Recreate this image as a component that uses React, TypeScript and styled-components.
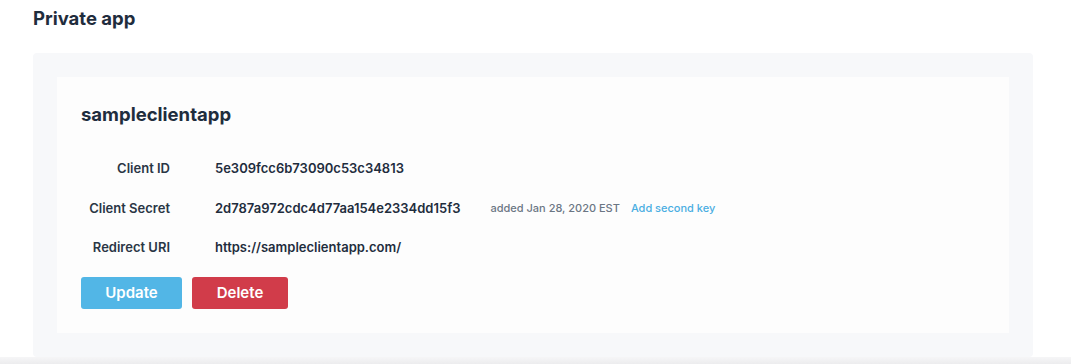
import { Fragment } from 'react'
import styled, { createGlobalStyle } from 'styled-components'

const GlobalStyle = createGlobalStyle`
  html, body {
    margin: 0;
    padding: 0;
    background: #ffffff;
    font-family: Inter, "Open Sans", "Liberation Sans", sans-serif;
    color: #213040;
  }
`

const Page = styled.main`
  height: 364px;
  padding: 0 38px 0 33px;
  box-sizing: border-box;
  overflow: hidden;
  position: relative;

  &::after {
    content: '';
    position: absolute;
    left: 0;
    right: 0;
    bottom: 0;
    height: 7px;
    background: linear-gradient(to bottom, #f6f6f7, #ececee);
  }
`

const PageTitle = styled.h1`
  margin: 0;
  padding-top: 7px;
  height: 46px;
  font-size: 18.5px;
  line-height: 22px;
  font-weight: 700;
  color: #1f2d3d;
`

const Panel = styled.section`
  background: #f7f8fa;
  border-radius: 4px;
  padding: 24px;
`

const Card = styled.div`
  background: #fdfdfd;
  padding: 24px;
  height: 256px;
  box-sizing: border-box;
`

const AppName = styled.h2`
  margin: 0;
  font-size: 18.5px;
  line-height: 26px;
  font-weight: 700;
  color: #1f2d3d;
`

const Fields = styled.dl`
  margin: 22px 0 0;
  display: grid;
  grid-template-columns: 89px auto;
  column-gap: 45px;
`

const Label = styled.dt`
  text-align: right;
  font-size: 13px;
  line-height: 39.5px;
  font-weight: 600;
  color: #2a3645;
`

const Value = styled.dd`
  margin: 0;
  display: flex;
  align-items: center;
  font-size: 13px;
  line-height: 39.5px;
  font-weight: 600;
  color: #1f2d3d;
`

const Meta = styled.span`
  margin-left: 30px;
  font-size: 11px;
  font-weight: 500;
  color: #6b7684;
`

const Link = styled.a`
  margin-left: 11px;
  font-size: 11px;
  font-weight: 500;
  color: #4aaee2;
  text-decoration: none;
  cursor: pointer;
`

const Actions = styled.div`
  display: flex;
  gap: 10px;
  margin-top: 9px;
`

const Button = styled.button<{ $variant: 'primary' | 'danger' }>`
  height: 32px;
  padding: 0;
  width: ${({ $variant }) => ($variant === 'primary' ? '101px' : '96px')};
  border: none;
  border-radius: 3px;
  background: ${({ $variant }) => ($variant === 'primary' ? '#52b6e6' : '#d13c4a')};
  color: #ffffff;
  font-family: inherit;
  font-size: 15px;
  font-weight: 600;
  cursor: pointer;
`

const fields = [
  { label: 'Client ID', value: '5e309fcc6b73090c53c34813' },
  { label: 'Client Secret', value: '2d787a972cdc4d77aa154e2334dd15f3', secret: true },
  { label: 'Redirect URI', value: 'https://sampleclientapp.com/' },
]

const App = () => {
  return (
    <>
      <GlobalStyle />
      <Page>
        <PageTitle>Private app</PageTitle>
        <Panel>
          <Card>
            <AppName>sampleclientapp</AppName>
            <Fields>
              {fields.map((field) => (
                <Fragment key={field.label}>
                  <Label>{field.label}</Label>
                  <Value>
                    {field.value}
                    {field.secret && (
                      <>
                        <Meta>added Jan 28, 2020 EST</Meta>
                        <Link>Add second key</Link>
                      </>
                    )}
                  </Value>
                </Fragment>
              ))}
            </Fields>
            <Actions>
              <Button $variant="primary">Update</Button>
              <Button $variant="danger">Delete</Button>
            </Actions>
          </Card>
        </Panel>
      </Page>
    </>
  )
}

export default App
